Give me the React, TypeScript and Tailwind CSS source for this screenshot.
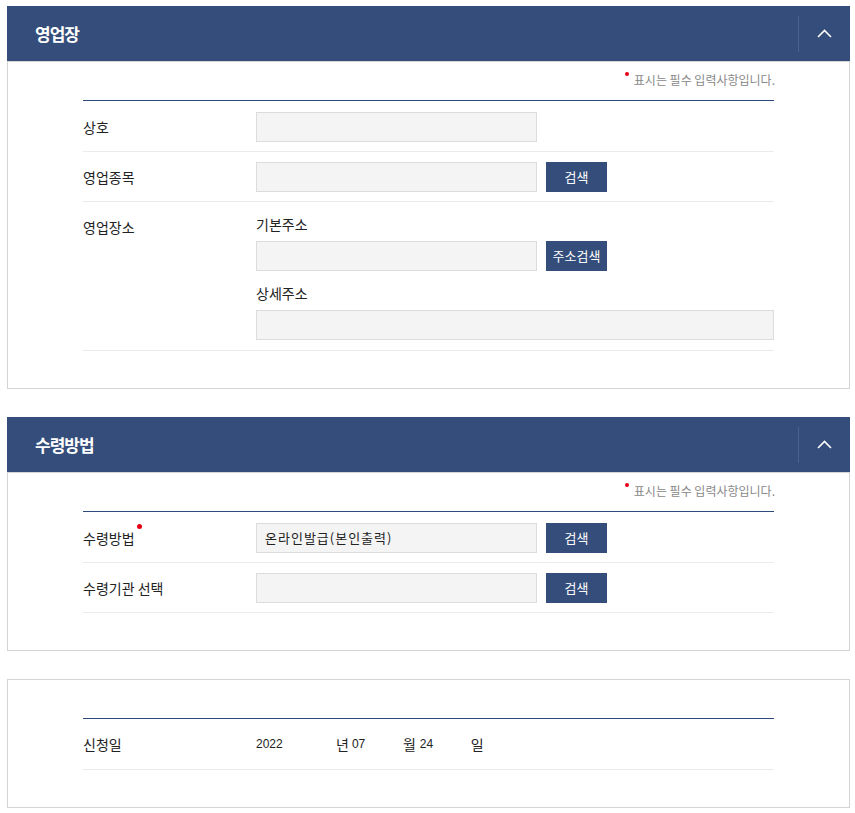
import { ReactNode } from "react";

const font = { fontFamily: '"Noto Sans CJK KR", "Noto Sans", sans-serif' };

function Chevron() {
  return (
    <svg width="15" height="9" viewBox="0 0 15 9" fill="none">
      <path d="M1 8 L7.5 1.5 L14 8" stroke="white" strokeWidth="1.6" />
    </svg>
  );
}

function PanelHeader({ title }: { title: string }) {
  return (
    <div className="flex h-[55px] items-center bg-[#344d7a]">
      <h2 className="flex-1 pl-[28px] text-[17px] font-bold tracking-[-1px] text-white">{title}</h2>
      <div className="h-[36px] w-px bg-[#4a6290]" />
      <button className="flex h-full w-[51px] items-center justify-center">
        <Chevron />
      </button>
    </div>
  );
}

function RequiredNote({ show = true }: { show?: boolean }) {
  return (
    <div className="flex h-[20px] justify-end pr-[74px] text-[12px] leading-[20px] text-[#888]">
      {show && (
        <span className="relative pl-[10px]">
          <span className="absolute left-[1px] top-[2px] h-[4px] w-[4px] rounded-full bg-[#e60012]" />
          표시는 필수 입력사항입니다.
        </span>
      )}
    </div>
  );
}

function Row({ label, required, children, top }: { label: string; required?: boolean; children: ReactNode; top?: boolean }) {
  return (
    <div
      className={`flex border-b border-[#ebebeb] pt-[10px] first:pt-[11px] ${
        top ? "items-start pb-[10px]" : "items-center pb-[9px]"
      }`}
    >
      <div className={`w-[173px] shrink-0 text-[14px] text-[#222] ${top ? "pt-[5px]" : ""}`}>
        <span className="relative">
          {label}
          {required && <span className="absolute -right-[7px] -top-[4px] h-[5px] w-[5px] rounded-full bg-[#e60012]" />}
        </span>
      </div>
      <div className="flex-1">{children}</div>
    </div>
  );
}

function Field({ value, wide }: { value?: string; wide?: boolean }) {
  return (
    <div
      className={`flex h-[30px] items-center border border-[#dcdcdc] bg-[#f4f4f4] px-[8px] text-[13px] tracking-[1px] text-[#222] ${
        wide ? "w-full" : "w-[281px]"
      }`}
    >
      {value}
    </div>
  );
}

function SearchButton({ text = "검색" }: { text?: string }) {
  return (
    <button className="ml-[9px] flex h-[30px] w-[61px] items-center justify-center bg-[#344d7a] text-[13px] text-white">
      {text}
    </button>
  );
}

function Panel({ title, note = true, children }: { title?: string; note?: boolean; children: ReactNode }) {
  return (
    <section className="mb-[28px]">
      {title && <PanelHeader title={title} />}
      <div className="border border-[#d4d4d4] pb-[37px] pt-[8px]">
        <RequiredNote show={note} />
        <div className="mx-[75px] mt-[10px] border-t border-[#2c4a7c]">{children}</div>
      </div>
    </section>
  );
}

const num = { fontFamily: '"Liberation Sans", sans-serif' };

export default function App() {
  return (
    <div className="min-h-screen bg-white pl-[7px] pt-[6px]" style={font}>
      <div className="w-[843px]">
        <Panel title="영업장">
          <Row label="상호">
            <Field />
          </Row>
          <Row label="영업종목">
            <div className="flex">
              <Field />
              <SearchButton />
            </div>
          </Row>
          <Row label="영업장소" top>
            <p className="text-[14px] leading-[24px] text-[#222]">기본주소</p>
            <div className="mt-[5px] flex">
              <Field />
              <SearchButton text="주소검색" />
            </div>
            <p className="mt-[10px] text-[14px] leading-[24px] text-[#222]">상세주소</p>
            <div className="mt-[5px]">
              <Field wide />
            </div>
          </Row>
        </Panel>

        <Panel title="수령방법">
          <Row label="수령방법" required>
            <div className="flex">
              <Field value="온라인발급(본인출력)" />
              <SearchButton />
            </div>
          </Row>
          <Row label="수령기관 선택">
            <div className="flex">
              <Field />
              <SearchButton />
            </div>
          </Row>
        </Panel>

        <Panel note={false}>
          <div className="flex h-[51px] items-center border-b border-[#ebebeb]">
            <div className="w-[173px] shrink-0 text-[14px] text-[#222]">신청일</div>
            <div className="flex items-center text-[#222]">
              <span className="w-[80px] text-[12px]" style={num}>2022</span>
              <span className="text-[14px]">년</span>
              <span className="ml-[3px] w-[51px] text-[12px]" style={num}>07</span>
              <span className="text-[14px]">월</span>
              <span className="ml-[4px] w-[51px] text-[12px]" style={num}>24</span>
              <span className="text-[14px]">일</span>
            </div>
          </div>
        </Panel>
      </div>
    </div>
  );
}
